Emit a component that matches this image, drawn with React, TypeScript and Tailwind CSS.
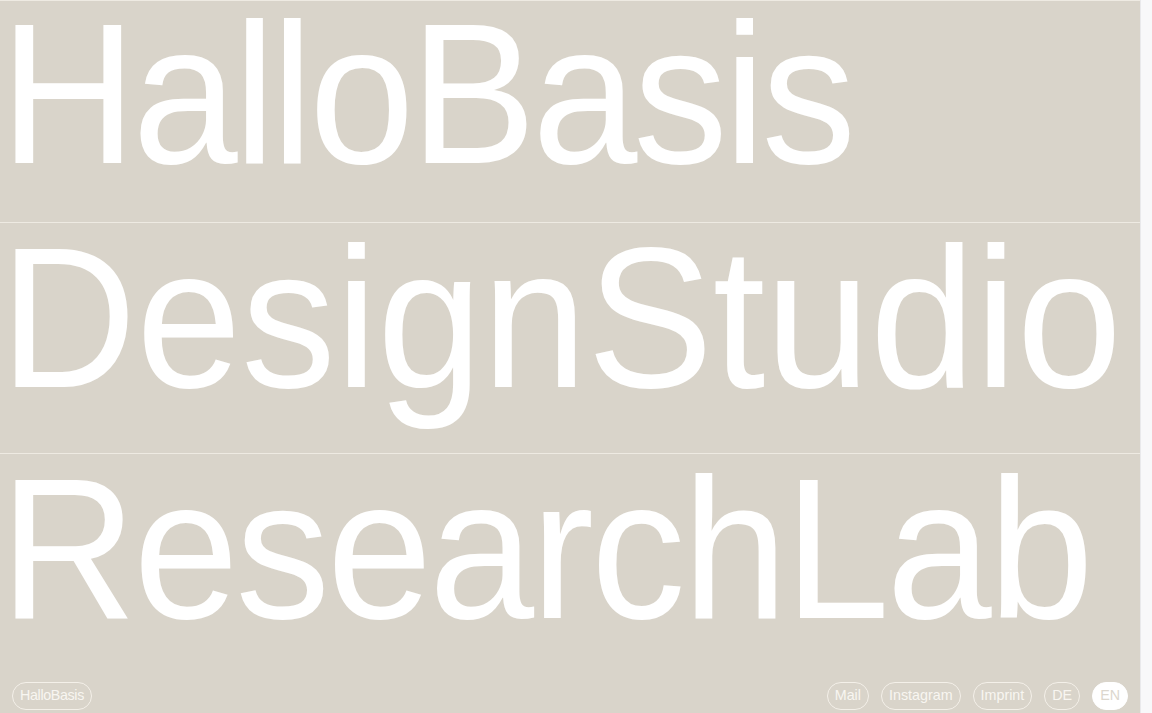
import React from 'react';

// reference face is a condensed-ish grotesk; squeeze Arial-metric Liberation a bit
const rows = [
  { text: 'HalloBasis', height: 'h-[222px]', tracking: 'tracking-[-0.0215em]', leading: 'leading-[186px]' },
  { text: 'DesignStudio', height: 'h-[231px]', tracking: 'tracking-[-0.001em]', leading: 'leading-[190px]' },
  { text: 'ResearchLab', height: 'h-[229px]', tracking: 'tracking-[-0.016em]', leading: 'leading-[190px]' },
];

const links = ['Mail', 'Instagram', 'Imprint', 'DE'];

const Pill: React.FC<{ label: string; active?: boolean; tight?: boolean }> = ({ label, active, tight }) => (
  <span
    className={[
      'flex h-[28px] items-center rounded-full border px-[7px] text-[14.3px]',
      tight ? 'tracking-[-0.025em]' : '',
      active ? 'border-white bg-white text-[#dcd7ce]' : 'border-[#f4f0e9] text-[#f8f6f1]',
    ].join(' ')}
  >
    {label}
  </span>
);

export default function App() {
  return (
    <div className="flex h-[713px] w-full overflow-hidden bg-[#d9d4ca] font-['Liberation_Sans',Arial,sans-serif]">
      <main className="flex min-w-0 flex-1 flex-col">
        {rows.map((row) => (
          <div key={row.text} className={`${row.height} shrink-0 border-t border-[#eeeae2]`}>
            <h1
              className={`w-max origin-left scale-x-[0.94] whitespace-nowrap text-[201px] font-normal text-white ${row.leading} ${row.tracking}`}
            >
              {row.text}
            </h1>
          </div>
        ))}

        <footer className="flex h-[31px] shrink-0 items-start justify-between px-3">
          <Pill label="HalloBasis" tight />
          <nav className="flex items-center gap-3">
            {links.map((l) => (
              <Pill key={l} label={l} />
            ))}
            <Pill label="EN" active />
          </nav>
        </footer>
      </main>

      {/* scrollbar track */}
      <aside className="w-[12px] shrink-0 border-l border-[#e9e9ec] bg-[#f8f8fa]" />
    </div>
  );
}
